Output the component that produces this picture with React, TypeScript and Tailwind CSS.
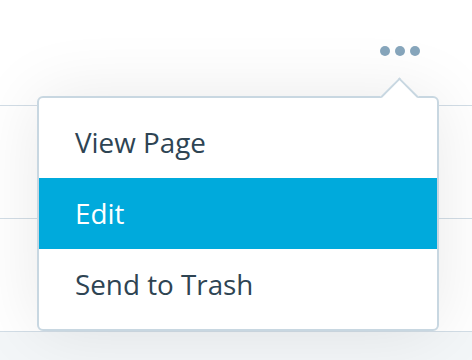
import React from "react";

const items = [
  { label: "View Page", active: false },
  { label: "Edit", active: true },
  { label: "Send to Trash", active: false },
];

export default function App() {
  return (
    <div
      className="relative h-[360px] w-[472px] overflow-hidden bg-[#f3f6f8]"
      style={{ fontFamily: '"Open Sans", "Noto Sans", sans-serif' }}
    >
      <div className="flex flex-col">
        <div className="h-[106px] border-b border-[#d2dde6] bg-white" />
        <div className="h-[113px] border-b border-[#d2dde6] bg-white" />
        <div className="h-[113px] border-b border-[#d2dde6] bg-white" />
      </div>

      {/* ellipsis toggle */}
      <div className="absolute left-[380px] top-[46px] flex gap-[5px]">
        <span className="h-[10px] w-[10px] rounded-full bg-[#87a6bc]" />
        <span className="h-[10px] w-[10px] rounded-full bg-[#87a6bc]" />
        <span className="h-[10px] w-[10px] rounded-full bg-[#87a6bc]" />
      </div>

      {/* popover */}
      <div className="absolute left-[37px] top-[96px] w-[402px] rounded-[6px] border-2 border-[#c8d7e1] bg-white py-[9px] shadow-[0_0_70px_rgba(0,0,0,0.09)]">
        <div className="absolute left-[347px] top-[-15px] h-[27px] w-[27px] rotate-45 border-l-2 border-t-2 border-[#c8d7e1] bg-white" />
        <ul className="relative">
          {items.map((item) => (
            <li
              key={item.label}
              className={
                item.active
                  ? "flex h-[71px] items-center bg-[#00aadc] pl-[36px] text-[27.8px] text-white"
                  : "flex h-[71px] items-center pl-[36px] text-[27.8px] text-[#2e4453]"
              }
            >
              {item.label}
            </li>
          ))}
        </ul>
      </div>
    </div>
  );
}
